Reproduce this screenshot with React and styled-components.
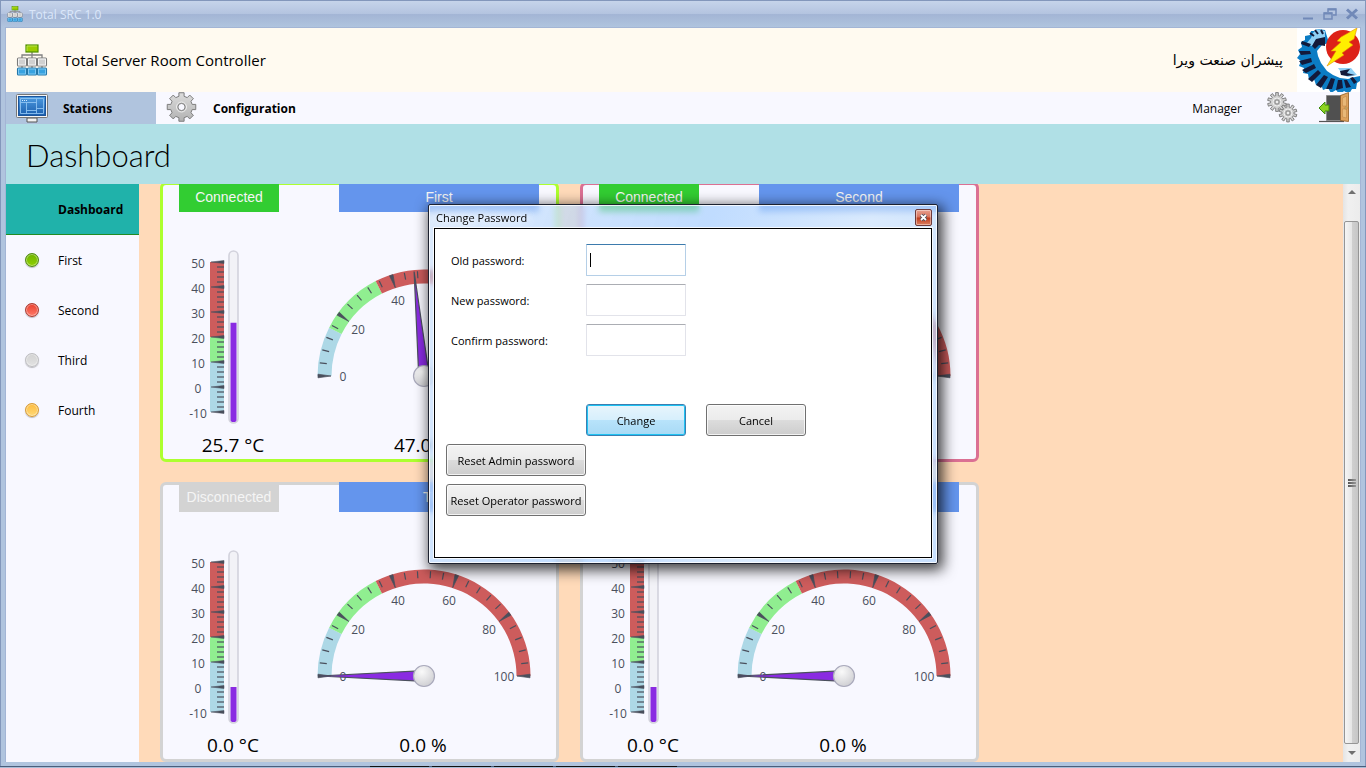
import { useState } from "react";
import styled, { createGlobalStyle } from "styled-components";

const INK = "#4a4f5c";

const stations = [
  { name: "First", led: "green", state: "Connected", temp: 25.7, humidity: 47 },
  { name: "Second", led: "red", state: "Connected", temp: 25.7, humidity: 47 },
  { name: "Third", led: "gray", state: "Disconnected", temp: 0, humidity: 0 },
  { name: "Fourth", led: "yellow", state: "Disconnected", temp: 0, humidity: 0 },
];

const borders = { green: "#adff2f", red: "#db7093", gray: "#d3d3d3", yellow: "#d3d3d3" };

const leds = {
  green: ["#6fb400", "#8fd000", "#4f8a10"],
  red: ["#e8402f", "#ff7a68", "#a83a30"],
  gray: ["#d2d2d2", "#e2e2e2", "#bdbdc0"],
  yellow: ["#fdbb3f", "#ffd977", "#d69a34"],
};

/* ---------- icons ---------- */

const NetworkIcon = ({ size }) => (
  <svg width={size} height={size} viewBox="0 0 32 32" aria-hidden="true">
    <path d="M16 8v6M6 14v-3h20v3M6 22v2M16 22v2M26 22v2" fill="none" stroke="#808080" strokeWidth="1.3" />
    <rect x="10" y="1" width="12" height="7" fill="#9ccc00" stroke="#4f8f00" strokeWidth="1.2" />
    <path d="M11 7V2h10" fill="none" stroke="#c0e860" strokeWidth=".8" />
    {[1.5, 11.5, 21.5].map((x) => (
      <g key={x}>
        <rect x={x} y="14" width="9" height="8" rx="1" fill="#d0d0d0" stroke="#7a7a7a" strokeWidth="1.1" />
        <rect x={x + 1} y="15" width="7" height="6" fill="none" stroke="#f8f8f8" strokeWidth=".9" />
        <rect x={x} y="24" width="9" height="7" rx="1" fill="#38a2e0" stroke="#2476a8" strokeWidth="1.1" />
        <rect x={x + 1} y="25" width="7" height="5" fill="none" stroke="#8fd2f8" strokeWidth=".8" />
      </g>
    ))}
  </svg>
);

const MonitorIcon = () => (
  <svg width="32" height="32" viewBox="0 0 32 32" aria-hidden="true">
    <defs>
      <linearGradient id="screen" x1="0" y1="0" x2="0" y2="1">
        <stop offset="0" stopColor="#4d9be0" />
        <stop offset="1" stopColor="#1c5fae" />
      </linearGradient>
    </defs>
    <path d="M11 26h10v4h-10z" fill="#f2f2f2" stroke="#555" />
    <rect x=".5" y="2.5" width="31" height="23" rx="1" fill="#f5f5f5" stroke="#777" />
    <rect x="2.5" y="4.5" width="27" height="19" fill="url(#screen)" stroke="#1d559b" />
    <path d="M4.500 6.500h23v15h-23zM4.500 10.500h16M10.500 10.500v11M20.500 6.500v15M20.500 16.500h7M10.500 18.500h10" fill="none" stroke="#8ec3f2" strokeWidth=".9" />
    <path d="M6 8.500h5" stroke="#d5ebff" strokeDasharray="1 1" />
  </svg>
);

const gearPath = (cx, cy, inner, outer, teeth) => {
  const step = (Math.PI * 2) / teeth;
  const at = (r, a) => `${(cx + r * Math.sin(a)).toFixed(2)} ${(cy - r * Math.cos(a)).toFixed(2)}`;
  let d = "";
  for (let i = 0; i < teeth; i++) {
    const a = i * step;
    d += `${i ? "L" : "M"}${at(inner, a - step * 0.3)}L${at(outer, a - step * 0.23)}L${at(outer, a + step * 0.23)}L${at(inner, a + step * 0.3)}`;
  }
  return d + "Z";
};

const GearIcon = () => (
  <svg width="32" height="32" viewBox="0 0 32 32" aria-hidden="true">
    <defs>
      <linearGradient id="steel" x1="0" y1="0" x2="0" y2="1">
        <stop offset="0" stopColor="#dcdcdc" />
        <stop offset="1" stopColor="#b2b2b2" />
      </linearGradient>
    </defs>
    <path d={gearPath(15.5, 15, 11, 14.5, 8)} fill="url(#steel)" stroke="#7d7d7d" strokeLinejoin="round" />
    <circle cx="15.5" cy="15" r="5" fill="#c4c4c4" stroke="#eee" />
    <circle cx="15.5" cy="15" r="3.6" fill="#f8f8ff" stroke="#7d7d7d" />
  </svg>
);

const GearsIcon = () => (
  <svg width="32" height="32" viewBox="0 0 32 32" aria-hidden="true">
    {[[11, 10, 6.5, 9.5], [22, 21, 6, 9]].map(([x, y, inner, outer]) => (
      <g key={x}>
        <path d={gearPath(x, y, inner, outer, 10)} fill="#d0d0d0" stroke="#777" strokeWidth=".9" />
        <circle cx={x} cy={y} r="4" fill="#bcbcbc" stroke="#f0f0f0" />
        <circle cx={x} cy={y} r="2" fill="#eee" stroke="#777" strokeWidth=".8" />
      </g>
    ))}
  </svg>
);

const ExitIcon = () => (
  <svg width="32" height="32" viewBox="0 0 32 32" aria-hidden="true">
    <path d="M1 29.500h25" stroke="#555" strokeWidth="1.2" />
    <path d="M8.500 3.500h16v25h-16z" fill="#505050" stroke="#8a8a8a" />
    <path d="M22.500 3.500l8-3v29l-8-1z" fill="#dfa25c" stroke="#8f5a20" strokeWidth=".8" />
    <path d="M24.500 6l4-2v10h-4zM24.500 17h4v9l-4-1z" fill="#e8b878" stroke="#c58a48" strokeWidth=".6" />
    <circle cx="28" cy="16" r="1" fill="#fff2a0" stroke="#7a4d1c" strokeWidth=".5" />
    <path d="M1 16l6-6v3h4v6H7v3z" fill="#8ed321" stroke="#3c8a0a" />
  </svg>
);

const CompanyLogo = () => (
  <svg width="63" height="64" viewBox="0 0 63 64" aria-hidden="true">
    <rect width="63" height="64" fill="#fff" />
    <path
      d="M28 2L20 1l-2 2-4 0-1 4-5 1 0 4-4 2 1 5-4 3 2 4-3 4 4 3-2 5 5 2-1 5 5 1 1 6 5-1 2 6 5-1 2 6 5-2 3 5 5-3 4 5 4-4 5 3 3-5 4 0 1-6 3-2V48l-5 1-7 2-8-1-7-3-6-4-6-8-3-7-1-5 5-6 7-2z"
      fill="#0b7cc4"
    />
    <path d="M16 5l4-4 8 2v8l-9 1-4 6-6-2 5-6z" fill="#8fd0f5" />
    <path d="M13 5l4 3M18 2l3 4M24 2l2 4" stroke="#131a3a" strokeWidth="2" />
    <path d="M19 11l9-2v9l-6-1-4 4-3-3z" fill="#131a3a" />
    <path
      d="M5 13l9 3-2 3-8-3zM2 23l11 0 1 3-10 1zM2 33l12-3 1 4-10 3zM5 42l12-6 2 4-10 5zM11 51l10-9 3 3-9 9zM19 57l8-10 4 2-7 11zM29 61l5-11 4 1-3 10zM39 62l2-10 4 0 1 8zM49 60l-2-8 3 0 4 7zM57 56l-4-6 3-1 4 5z"
      fill="#131a3a"
    />
    <path d="M41 40h13l6 7-9 2-5-2z" fill="#8fd0f5" />
    <path d="M43 43l10-2-3 4 8 2-8 1-6-1z" fill="#131a3a" />
    <circle cx="46" cy="19" r="17" fill="#dd2218" />
    <path d="M44 9L60 0l-3 11-5 3 4 3-11 8 2 2-17 11 9-15-5 0 10-9-4-1z" fill="#ffee00" stroke="#e58b00" strokeWidth=".6" />
  </svg>
);

/* ---------- gauges ---------- */

const Thermometer = ({ value }) => {
  const y = (v) => 137 - v * 2.5;
  const ticks = Array.from({ length: 31 }, (_, i) => i * 2 - 10);
  return (
    <svg width="54" height="180" viewBox="0 0 54 180" role="img" aria-label="Temperature">
      <rect x="23" y={y(50)} width="14" height="75" fill="#cd5c5c" />
      <rect x="23" y={y(20)} width="14" height="25" fill="#90ee90" />
      <rect x="23" y={y(10)} width="14" height="50" fill="#add8e6" />
      {ticks.map((t) =>
        t % 10 === 0 ? (
          <g key={t}>
            <path d={`M24 ${y(t)}L37 ${y(t) - 1.5}v3z`} fill={INK} stroke={INK} strokeWidth=".5" />
            <GaugeLabel x="11" y={y(t) + 6}>{t}</GaugeLabel>
          </g>
        ) : (
          <path key={t} d={`M30 ${y(t)}h7`} stroke={INK} strokeOpacity=".6" strokeWidth="2" />
        )
      )}
      <rect x="42" y="1" width="9" height="172" rx="4.5" fill="#f2f2f7" stroke="#d2d2dc" strokeWidth="1.6" />
      <path d={`M43.500 ${y(value)}h6V170q0 2-3 2t-3-2z`} fill="#8a2be2" />
    </svg>
  );
};

const point = (v, r) => {
  const a = (Math.PI * v) / 100;
  return [110 - r * Math.cos(a), 110 - r * Math.sin(a)];
};

const band = (from, to) =>
  `M${point(from, 106.5)}A106.5 106.5 0 0 1 ${point(to, 106.5)}L${point(to, 92.5)}A92.5 92.5 0 0 0 ${point(from, 92.5)}Z`;

const dialLabels = [
  [0, 29, 115], [20, 44, 68], [40, 84, 39], [60, 135, 39], [80, 175, 68], [100, 190, 115],
];

const Dial = ({ value }) => (
  <svg width="220" height="148" viewBox="0 0 220 148" role="img" aria-label="Humidity">
    <defs>
      <radialGradient id="hub" cx=".4" cy=".3" r=".7">
        <stop offset="0" stopColor="#fafafa" />
        <stop offset="1" stopColor="#d0d0d4" />
      </radialGradient>
    </defs>
    <path d={band(0, 15)} fill="#add8e6" />
    <path d={band(15, 35)} fill="#90ee90" />
    <path d={band(35, 100)} fill="#cd5c5c" />
    {Array.from({ length: 26 }, (_, i) => i * 4).map((t) =>
      t % 20 === 0 ? (
        <path
          key={t}
          d="M17 110L4 108.200v3.600z"
          fill={INK}
          stroke={INK}
          strokeWidth=".7"
          transform={`rotate(${t * 1.8} 110 110)`}
        />
      ) : (
        <path key={t} d={`M${point(t, 98)}L${point(t, 105)}`} stroke={INK} strokeWidth="1.2" />
      )
    )}
    {dialLabels.map(([t, x, y]) => (
      <GaugeLabel key={t} x={x} y={y}>{t}</GaugeLabel>
    ))}
    <path
      d="M5 110L105 105v10z"
      fill="#8a2be2"
      stroke={INK}
      strokeWidth="1.2"
      transform={`rotate(${value * 1.8} 110 110)`}
    />
    <circle cx="110" cy="110" r="10.5" fill="url(#hub)" stroke="#a9a9bb" strokeWidth="1.2" />
  </svg>
);

const StationCard = ({ station }) => (
  <Card $color={borders[station.led]}>
    <CardHead>
      <Badge $bg={station.state === "Connected" ? "#32cd32" : "#d3d3d3"}>{station.state}</Badge>
      <Badge $bg="#6495ed">{station.name}</Badge>
    </CardHead>
    <Gauges>
      <Thermometer value={station.temp} />
      <Dial value={station.humidity} />
    </Gauges>
    <Readings>
      <span>{station.temp.toFixed(1)} °C</span>
      <span>{station.humidity.toFixed(1)} %</span>
    </Readings>
  </Card>
);

const ChangePassword = ({ onClose }) => (
  <Overlay>
    <Dialog role="dialog" aria-labelledby="dialog-title">
      <DialogTitle>
        <h2 id="dialog-title">Change Password</h2>
        <CloseButton type="button" aria-label="Close" onClick={onClose}>
          <svg width="9" height="9" viewBox="0 0 9 9">
            <path d="M2 2l5 5M7 2L2 7" stroke="#4a4a55" strokeWidth="3.4" />
            <path d="M2 2l5 5M7 2L2 7" stroke="#fff" strokeWidth="1.8" />
          </svg>
        </CloseButton>
      </DialogTitle>
      <Form onSubmit={(e) => e.preventDefault()}>
        <Row>
          <label htmlFor="old">Old password:</label>
          <Field id="old" type="password" placeholder=" " autoFocus />
        </Row>
        <Row>
          <label htmlFor="new">New password:</label>
          <Field id="new" type="password" placeholder=" " />
        </Row>
        <Row>
          <label htmlFor="confirm">Confirm password:</label>
          <Field id="confirm" type="password" placeholder=" " />
        </Row>
        <Actions>
          <Button type="submit" $primary>Change</Button>
          <Button type="button" onClick={onClose}>Cancel</Button>
        </Actions>
        <ResetButton type="button">Reset Admin password</ResetButton>
        <ResetButton type="button">Reset Operator password</ResetButton>
      </Form>
    </Dialog>
  </Overlay>
);

export default function App() {
  const [open, setOpen] = useState(true);
  return (
    <Screen>
      <GlobalStyle />
      <Window>
        <TitleBar>
          <NetworkIcon size={16} />
          <span>Total SRC 1.0</span>
          <WindowButton type="button" aria-label="Minimize">
            <svg width="14" height="14"><path d="M2 11.500h10" stroke="#7189b8" strokeWidth="2" /></svg>
          </WindowButton>
          <WindowButton type="button" aria-label="Restore">
            <svg width="14" height="14">
              <path d="M5 5V2h8v6h-3M1 6h8v6H1z" fill="none" stroke="#7189b8" strokeWidth="1.5" />
              <path d="M5 2.500h8M1 6.500h8" stroke="#7189b8" strokeWidth="2" />
            </svg>
          </WindowButton>
          <WindowButton type="button" aria-label="Close window">
            <svg width="14" height="14"><path d="M2 2.500l10 9M12 2.500l-10 9" stroke="#7189b8" strokeWidth="3" /></svg>
          </WindowButton>
        </TitleBar>
        <Client>
          <Brand>
            <BrandIcon><NetworkIcon size={32} /></BrandIcon>
            <h1>Total Server Room Controller</h1>
            <Company lang="fa" dir="rtl">پیشران صنعت ویرا</Company>
            <CompanyLogo />
          </Brand>
          <Nav>
            <Tab type="button" $active><MonitorIcon />Stations</Tab>
            <Tab type="button"><GearIcon />Configuration</Tab>
            <User>Manager</User>
            <IconButton type="button" aria-label="Settings"><GearsIcon /></IconButton>
            <IconButton type="button" aria-label="Exit"><ExitIcon /></IconButton>
          </Nav>
          <PageTitle>Dashboard</PageTitle>
          <Body>
            <Sidebar>
              <SideItem type="button" $active><span />Dashboard</SideItem>
              {stations.map((s) => (
                <SideItem type="button" key={s.name}>
                  <Led $colors={leds[s.led]} />
                  {s.name}
                </SideItem>
              ))}
            </Sidebar>
            <Main>
              <Cards>
                {stations.map((s) => <StationCard key={s.name} station={s} />)}
              </Cards>
            </Main>
            <ScrollBar>
              <Arrow $up />
              <Thumb><i /><i /><i /></Thumb>
              <Arrow />
            </ScrollBar>
          </Body>
        </Client>
      </Window>
      <TaskBar><i /><i /><i /><i /><i /></TaskBar>
      {open && <ChangePassword onClose={() => setOpen(false)} />}
    </Screen>
  );
}

/* ---------- styles ---------- */

const GlobalStyle = createGlobalStyle`
  * { box-sizing: border-box; }
  body {
    margin: 0;
    overflow: hidden;
    font-family: "Open Sans", "Noto Sans", sans-serif;
    font-size: 12px;
    color: #000;
  }
  button, input { font: inherit; color: inherit; }
  button { border: 0; padding: 0; background: none; }
  svg { display: block; flex: none; }
  h1, h2 { margin: 0; font-weight: 400; }
`;

const Screen = styled.div`
  height: 100vh;
  display: flex;
  flex-direction: column;
`;

const Window = styled.div`
  flex: 1;
  min-height: 0;
  display: flex;
  flex-direction: column;
  padding: 0 4px 4px;
  border: 1px solid #8397bb;
  border-bottom: 0;
  background: #b0c4de;
`;

const TitleBar = styled.header`
  height: 26px;
  flex: none;
  display: flex;
  align-items: center;
  gap: 6px;
  margin: 0 -4px;
  padding: 0 6px;
  color: #dbe7fa;
  background: linear-gradient(#c6d4ea, #b4c4e0 48%, #a3b5d5 52%, #b0c4de);

  span { flex: 1; }
`;

const WindowButton = styled.button`
  margin-left: 2px;
`;

const Client = styled.div`
  flex: 1;
  min-height: 0;
  display: flex;
  flex-direction: column;
  border: 1px solid #a3b5d5;
  border-bottom: 0;
`;

const Brand = styled.div`
  height: 64px;
  flex: none;
  display: flex;
  align-items: center;
  background: #fffaf0;

  h1 { flex: 1; font-size: 15px; }
`;

const BrandIcon = styled.div`
  width: 57px;
  padding-left: 10px;
`;

const Company = styled.span`
  margin-right: 14px;
  font-family: "DejaVu Sans", sans-serif;
  font-size: 14px;
`;

const Nav = styled.nav`
  height: 32px;
  flex: none;
  display: flex;
  align-items: center;
  background: #f8f8ff;
`;

const Tab = styled.button`
  width: 150px;
  height: 32px;
  display: flex;
  align-items: center;
  gap: 15px;
  padding-left: 10px;
  font-weight: 700;
  background: ${(p) => (p.$active ? "#b0c4de" : "transparent")};
`;

const User = styled.span`
  margin-left: auto;
  padding-right: 24px;
`;

const IconButton = styled.button`
  margin-right: 10px;

  & + & { margin-left: 10px; }
`;

const PageTitle = styled.h2`
  height: 60px;
  flex: none;
  padding-left: 20px;
  font-family: Lato, "Open Sans", sans-serif;
  font-size: 31px;
  font-weight: 300;
  line-height: 62px;
  background: #b0e0e6;
`;

const Body = styled.div`
  flex: 1;
  min-height: 0;
  display: flex;
`;

const Sidebar = styled.aside`
  width: 133px;
  flex: none;
  display: flex;
  flex-direction: column;
  background: #f8f8ff;
`;

const SideItem = styled.button`
  height: ${(p) => (p.$active ? 51 : 50)}px;
  display: grid;
  grid-template-columns: 52px 1fr;
  align-items: center;
  justify-items: start;
  text-align: left;
  font-weight: ${(p) => (p.$active ? 700 : 400)};
  background: ${(p) => (p.$active ? "#20b2aa" : "transparent")};
  border-bottom: ${(p) => (p.$active ? "1px solid #228b22" : "0")};
`;

const Led = styled.span`
  width: 14px;
  height: 14px;
  margin-left: 19px;
  border: 1px solid ${(p) => p.$colors[2]};
  border-radius: 50%;
  background: linear-gradient(${(p) => p.$colors[0]}, ${(p) => p.$colors[1]});
  box-shadow: inset 0 0 0 1px rgba(255, 255, 255, 0.4), 0 1px 1px rgba(0, 0, 0, 0.25);
`;

const Main = styled.main`
  flex: 1;
  min-width: 0;
  overflow: hidden;
  padding-left: 21px;
  background: #ffdab9;
`;

/* the list is scrolled down by two pixels */
const Cards = styled.div`
  display: grid;
  grid-template-columns: repeat(2, 399px);
  gap: 20px 21px;
  margin-top: -2px;
`;

const Card = styled.section`
  height: 280px;
  border: 3px solid ${(p) => p.$color};
  border-radius: 6px;
  background: #f8f8ff;
`;

const CardHead = styled.div`
  display: grid;
  grid-template-columns: 100px 200px;
  gap: 60px;
  margin: -3px 0 0 16px;
`;

const Badge = styled.div`
  font-family: "Liberation Sans", Arial, sans-serif;
  font-size: 14px;
  line-height: 30px;
  text-align: center;
  color: #f5f5f5;
  background: ${(p) => p.$bg};
`;

const Gauges = styled.div`
  display: flex;
  align-items: center;
  gap: 73px;
  padding: 38px 0 0 24px;
`;

const GaugeLabel = styled.text`
  font-size: 12px;
  text-anchor: middle;
  fill: #4a4f5c;
`;

const Readings = styled.div`
  display: grid;
  grid-template-columns: 140px 240px;
  font-size: 19px;
  line-height: 30px;
  text-align: center;
`;

const ScrollBar = styled.div`
  width: 17px;
  flex: none;
  display: flex;
  flex-direction: column;
  align-items: center;
  background: linear-gradient(90deg, #e4e4e4, #f0f0f0 30%, #ececec);
`;

const Arrow = styled.div`
  border: 4px solid transparent;
  border-top-width: ${(p) => (p.$up ? 0 : 4)}px;
  border-bottom-width: ${(p) => (p.$up ? 4 : 0)}px;
  border-${(p) => (p.$up ? "bottom" : "top")}-color: #707070;
  margin: ${(p) => (p.$up ? "6px 0 27px" : "7px 0")};
`;

const Thumb = styled.div`
  flex: 1;
  width: 15px;
  display: flex;
  flex-direction: column;
  align-items: center;
  justify-content: center;
  gap: 1px;
  border: 1px solid #959595;
  border-radius: 2px;
  background: linear-gradient(90deg, #f5f5f5, #e6e6e6 50%, #d0d0d0 51%, #c6c6c6);

  i { width: 8px; height: 2px; background: linear-gradient(90deg, #555, #999); }
`;

const TaskBar = styled.div`
  height: 2px;
  flex: none;
  display: flex;
  gap: 3px;
  padding-left: 370px;
  border-top: 1px solid #4a5e7c;
  background: #a9bcd6;

  i { width: 59px; height: 1px; margin-top: -1px; background: #111; }
`;

const Overlay = styled.div`
  position: fixed;
  inset: 0;
  display: flex;
  align-items: center;
  justify-content: center;
`;

const Dialog = styled.div`
  width: 510px;
  height: 360px;
  display: flex;
  flex-direction: column;
  padding: 0 5px 5px;
  border: 1px solid #1d2230;
  border-radius: 2px;
  font-size: 11px;
  background: linear-gradient(110deg, rgba(205, 226, 250, 0.65), rgba(168, 208, 255, 0.7) 45%, rgba(205, 228, 252, 0.7) 70%, rgba(178, 212, 252, 0.7));
  backdrop-filter: blur(3px);
  box-shadow: inset 0 0 0 1px rgba(255, 255, 255, 0.8), 3px 4px 14px 2px rgba(0, 0, 0, 0.75);
`;

const DialogTitle = styled.div`
  height: 23px;
  flex: none;
  display: flex;
  align-items: center;
  justify-content: space-between;
  padding: 2px 0 0 2px;

  h2 { font-size: 11px; text-shadow: 0 0 8px #fff, 0 0 8px #fff; }
`;

const CloseButton = styled.button`
  width: 17px;
  height: 17px;
  display: grid;
  place-items: center;
  border: 1px solid #6d3a3a;
  border-radius: 2px;
  background: linear-gradient(#e8a090, #d8715a 48%, #bd3a1c 52%, #dd8060);
  box-shadow: inset 0 0 0 1px rgba(255, 255, 255, 0.4);
`;

const Form = styled.form`
  flex: 1;
  display: flex;
  flex-direction: column;
  gap: 8px;
  padding: 15px 11px;
  border: 1px solid #000;
  outline: 1px solid rgba(255, 255, 255, 0.8);
  background: #fff;
`;

const Row = styled.div`
  display: grid;
  grid-template-columns: 140px 100px;
  align-items: center;

  label { padding-left: 5px; }
`;

/* an empty focused field keeps a steady caret */
const Field = styled.input`
  width: 100px;
  height: 32px;
  padding: 0 3px;
  border: 1px solid #e2e3ea;
  border-top-color: #abadb3;
  border-radius: 1px;
  background: #fff;

  &:focus {
    outline: none;
    border-color: #b5cfe7;
    border-top-color: #3d7bad;
  }
  &:focus:placeholder-shown {
    caret-color: transparent;
    background: linear-gradient(#000, #000) 3px 8px / 1px 14px no-repeat #fff;
  }
`;

const Button = styled.button`
  width: 100px;
  height: 32px;
  border: 1px solid ${(p) => (p.$primary ? "#3c7fb1" : "#707070")};
  border-radius: 3px;
  white-space: nowrap;
  background: ${(p) =>
    p.$primary
      ? "linear-gradient(#e8f5fc, #d6effc 50%, #b8e3fb 51%, #a8daf5)"
      : "linear-gradient(#f3f3f3, #ebebeb 50%, #dcdcdc 51%, #cdcdcd)"};
  box-shadow: inset 0 0 0 1px ${(p) => (p.$primary ? "#1fc3f3" : "rgba(255, 255, 255, 0.75)")};
`;

const ResetButton = styled(Button)`
  width: 140px;
`;

const Actions = styled.div`
  display: flex;
  gap: 20px;
  padding: 40px 0 0 140px;
`;
